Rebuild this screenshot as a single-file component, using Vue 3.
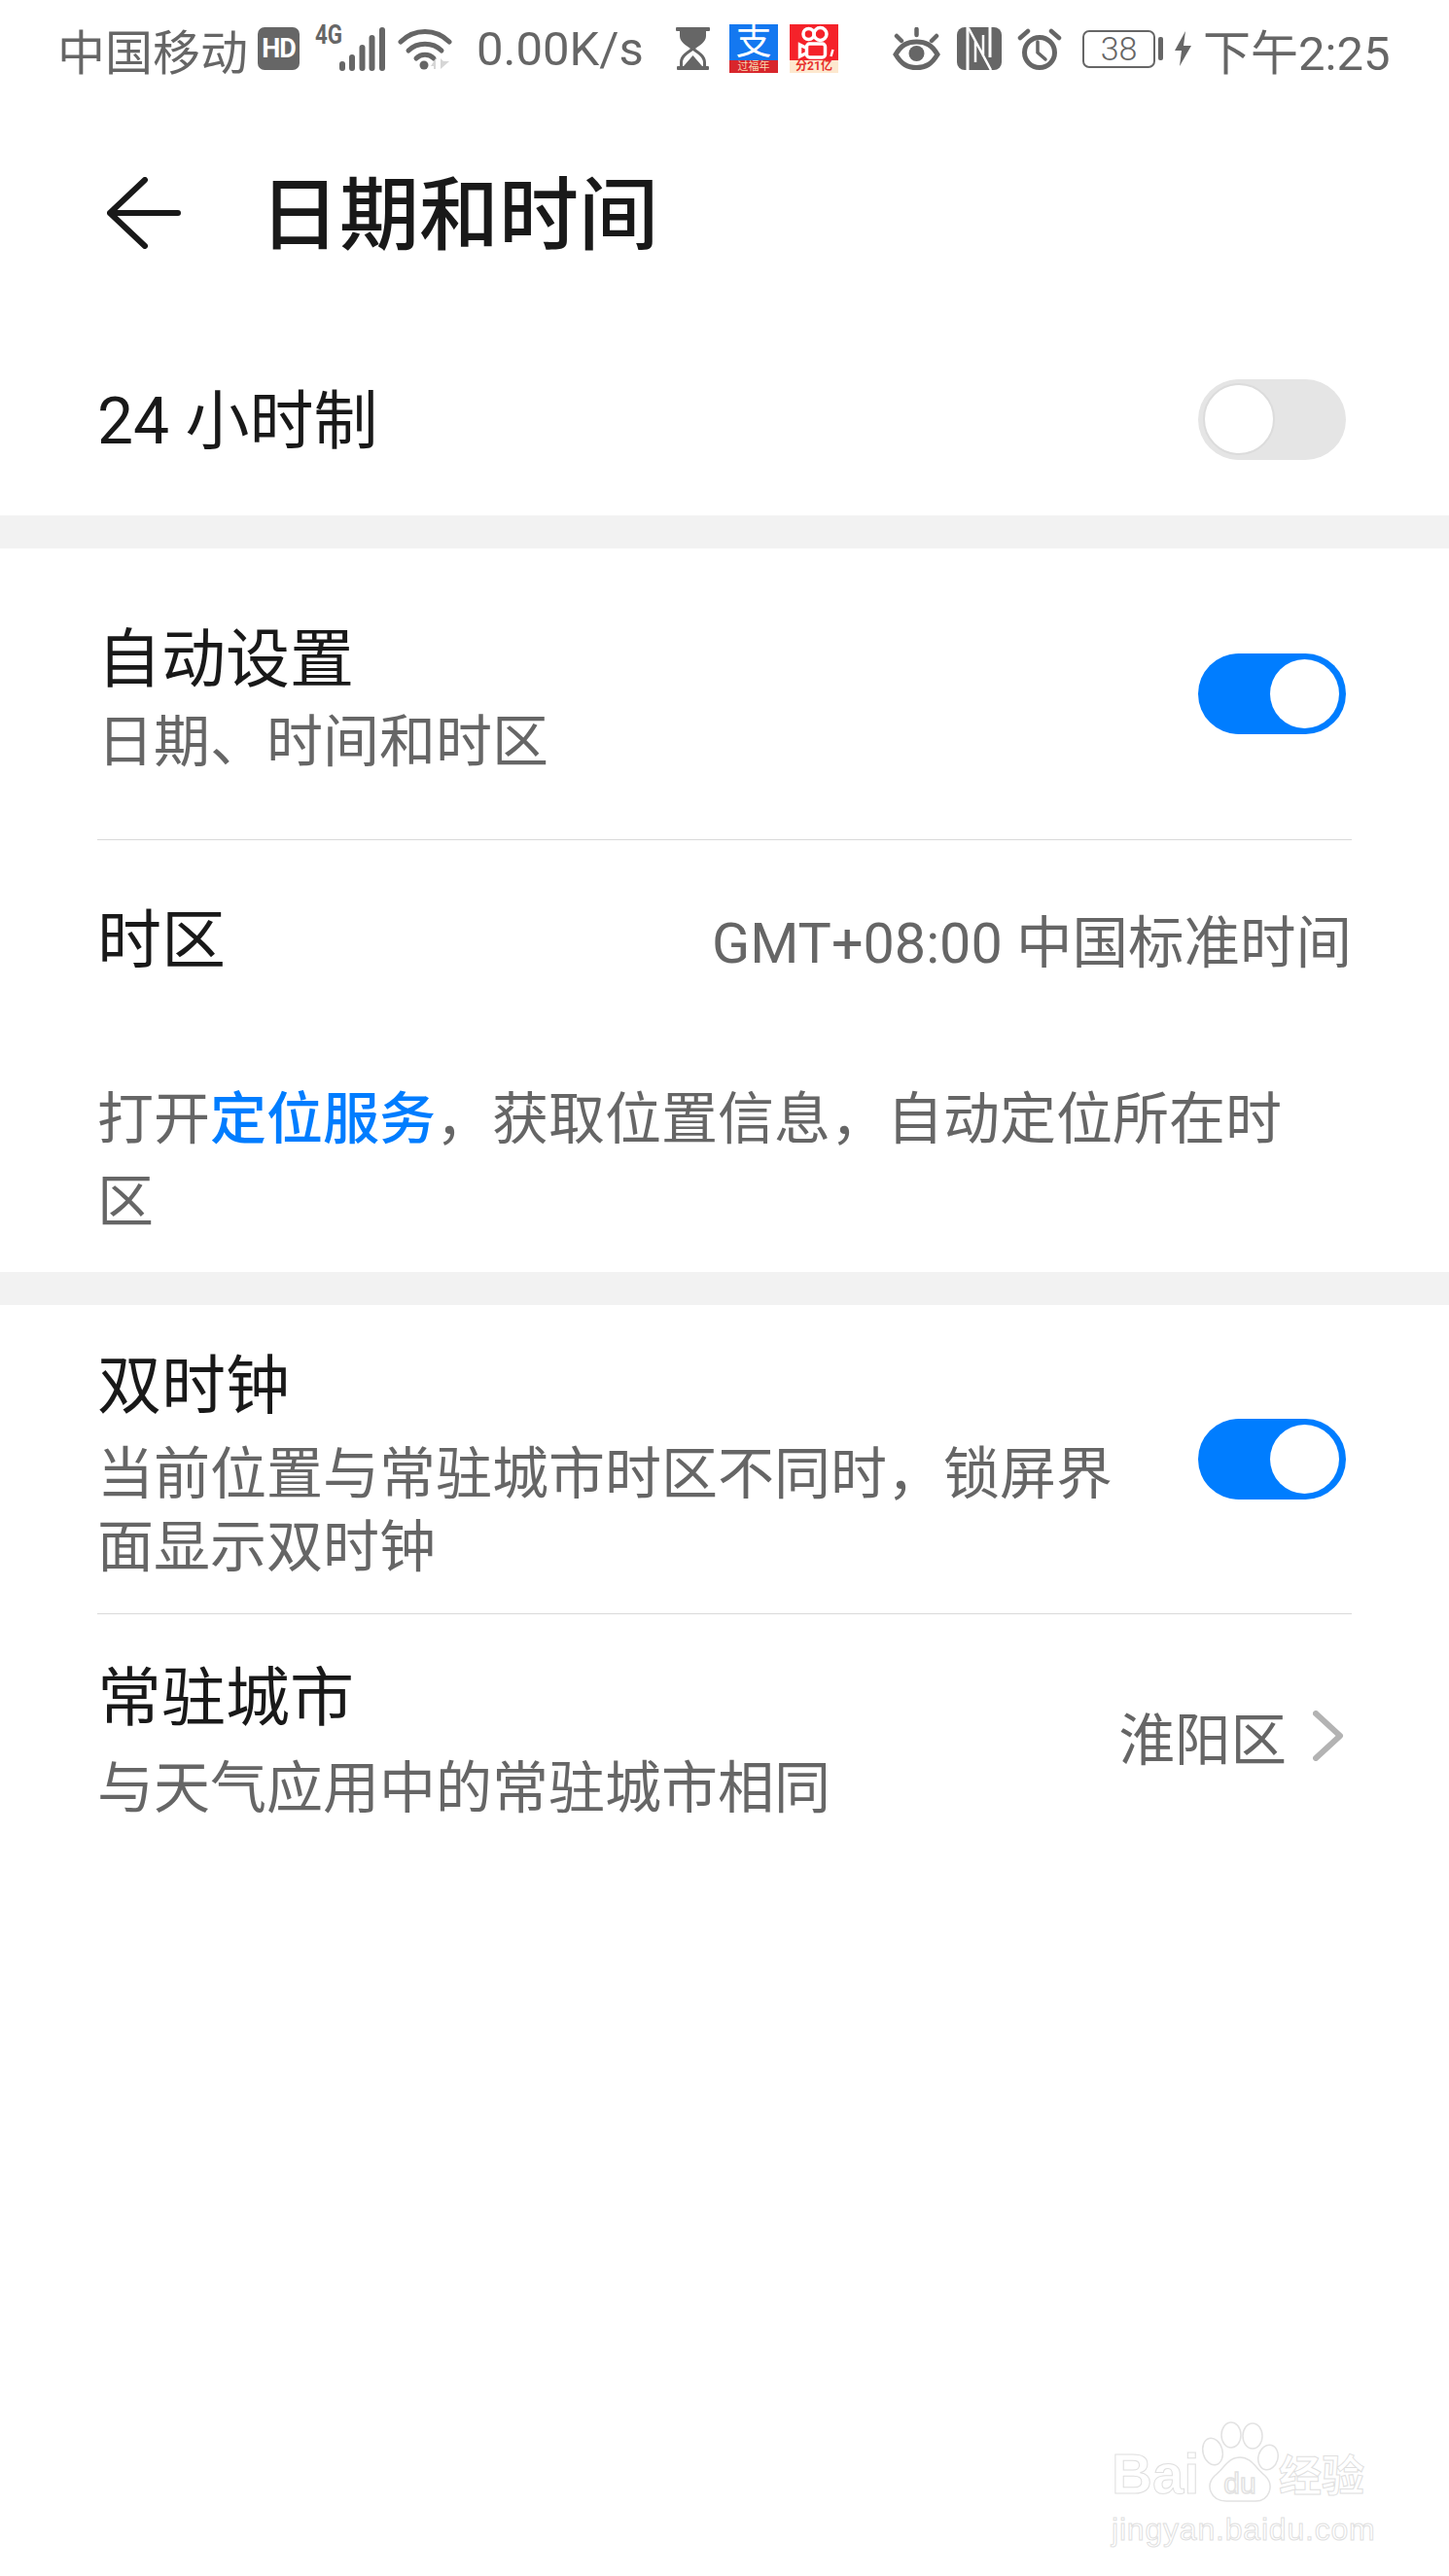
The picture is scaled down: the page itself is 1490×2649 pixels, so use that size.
<script setup>
// 日期和时间 设置页
</script>

<template>
  <div class="page">
    <!-- 状态栏 -->
    <header class="status-bar">
      <span class="carrier">中国移动</span>
      <span class="hd-badge">HD</span>
      <span class="net-type">4G</span>
      <svg class="signal" viewBox="0 0 47 45" fill="#666">
        <rect x="0" y="35" width="6" height="10" rx="3" />
        <rect x="10" y="28" width="6" height="17" rx="3" />
        <rect x="20.500" y="18" width="6" height="27" rx="3" />
        <rect x="30.500" y="8" width="6" height="37" rx="3" />
        <rect x="41" y="0" width="6" height="45" rx="3" />
      </svg>
      <svg class="wifi" viewBox="0 0 56 44" fill="none" stroke="#666" stroke-width="5" stroke-linecap="round">
        <path d="M3 15C17 1 39 1 53 15" />
        <path d="M11 24C20 15 36 15 45 24" />
        <path d="M19 32C24 27 32 27 37 32" />
        <circle cx="27" cy="39" r="4.500" fill="#666" stroke="none" />
        <path d="M39 43V32L34 40H37V43ZM44 32V43L53 35H47Z" fill="#d6d6d6" stroke="none" />
      </svg>
      <span class="speed">0.00K/s</span>
      <svg class="hourglass" viewBox="0 0 35 44" fill="#666">
        <rect x="0" y="0" width="35" height="4" rx="1" />
        <rect x="1" y="40" width="33" height="4" rx="1" />
        <path d="M4 4H31V9C31 15 24 19 20 22C24 25 31 29 31 36V40H28V36C28 31 22 27 17.500 24C13 27 7 31 7 36V40H4V36C4 29 11 25 15 22C11 19 4 15 4 9Z" />
        <path d="M17.500 29L27 40H8Z" />
      </svg>
      <span class="app-icon alipay">
        <span class="alipay-char">支</span>
        <span class="alipay-band">过福年</span>
      </span>
      <span class="app-icon kuaishou">
        <svg class="kuaishou-cam" viewBox="0 0 49 37" fill="none" stroke="#fff" stroke-width="3.500">
          <circle cx="19" cy="10" r="5.500" />
          <circle cx="31" cy="10" r="6.500" />
          <rect x="17" y="20" width="19" height="14" rx="3" />
          <path d="M16 24L10 21V33L16 30" />
          <path d="M44 26L42 33" stroke-width="2.500" />
        </svg>
        <span class="kuaishou-band">分21亿</span>
      </span>
      <svg class="eye" viewBox="0 0 49 44" fill="none" stroke="#666" stroke-width="5" stroke-linecap="round">
        <path d="M3 28C9 18 15 15 24.500 15C34 15 40 18 46 28C40 38 34 41.500 24.500 41.500C15 41.500 9 38 3 28Z" />
        <circle cx="24.500" cy="27" r="8" fill="#666" stroke="none" />
        <path d="M24.500 2V8M4 9L9 14M45 9L40 14" stroke-width="4.500" />
      </svg>
      <svg class="nfc" viewBox="0 0 46 44">
        <rect width="46" height="44" rx="8" fill="#666" />
        <path d="M11 0V44M34 0V31" stroke="#fff" stroke-width="3" />
        <path d="M12 1L35 44M19 14V36M27 8V30" stroke="#fff" stroke-width="2.500" fill="none" />
      </svg>
      <svg class="alarm" viewBox="0 0 46 44" fill="none" stroke="#666" stroke-width="5" stroke-linecap="round">
        <circle cx="23" cy="26" r="15.500" />
        <path d="M21 15V26L29 33" stroke-width="3.500" />
        <path d="M3 11L11 4M43 11L35 4" stroke-width="4.500" />
      </svg>
      <span class="battery"><span class="battery-level">38</span></span>
      <span class="battery-nub"></span>
      <svg class="bolt" viewBox="0 0 17 36" fill="#666">
        <path d="M11 0L0 20H7L5 36L17 15H9Z" />
      </svg>
      <span class="clock">下午2:25</span>
    </header>

    <!-- 标题栏 -->
    <div class="toolbar">
      <svg class="back-icon" viewBox="0 0 76 74" fill="none" stroke="#191919" stroke-width="6" stroke-linecap="round" stroke-linejoin="round">
        <path d="M39 3L3 37L39 71M3 37H73" />
      </svg>
      <h1 class="toolbar-title">日期和时间</h1>
    </div>

    <section class="group group-first">
      <div class="row row-clock">
        <span class="row-title">24 小时制</span>
        <span class="switch"><span class="switch-knob"></span></span>
      </div>
    </section>

    <section class="group">
      <div class="row row-auto">
        <div class="row-text">
          <div class="row-title">自动设置</div>
          <div class="row-sub">日期、时间和时区</div>
        </div>
        <span class="switch on"><span class="switch-knob"></span></span>
      </div>
      <div class="divider"></div>
      <div class="row row-zone">
        <span class="row-title">时区</span>
        <span class="row-value">GMT+08:00 中国标准时间</span>
      </div>
      <p class="zone-note">打开<span class="link">定位服务</span>，获取位置信息，自动定位所在时区</p>
    </section>

    <section class="group">
      <div class="row row-dual">
        <div class="row-text dual-text">
          <div class="row-title">双时钟</div>
          <div class="row-sub">当前位置与常驻城市时区不同时，锁屏界面显示双时钟</div>
        </div>
        <span class="switch on"><span class="switch-knob"></span></span>
      </div>
      <div class="divider"></div>
      <div class="row row-city">
        <div class="row-text">
          <div class="row-title">常驻城市</div>
          <div class="row-sub">与天气应用中的常驻城市相同</div>
        </div>
        <div class="city-value">
          <span class="row-value">淮阳区</span>
          <svg class="chevron" viewBox="0 0 32 52" fill="none" stroke="#b3b3b3" stroke-width="6" stroke-linecap="round" stroke-linejoin="round">
            <path d="M3 3L28 26L3 49" />
          </svg>
        </div>
      </div>
    </section>

    <!-- 水印 -->
    <div class="watermark">
      <div class="wm-top">
        <span class="wm-bai">Bai</span>
        <svg class="wm-paw" viewBox="0 0 80 84" fill="#fff" stroke="#e2e2e2" stroke-width="1.500">
          <ellipse cx="12" cy="31" rx="10" ry="14" transform="rotate(-15 12 31)" />
          <ellipse cx="31" cy="14" rx="10" ry="13" />
          <ellipse cx="53" cy="15" rx="10" ry="13" />
          <ellipse cx="69" cy="37" rx="10" ry="13" transform="rotate(15 69 37)" />
          <path d="M40 37C52 37 56 48 66 56C76 66 70 82 56 82H26C10 82 4 66 14 56C24 48 28 37 40 37Z" />
          <text x="40" y="74" text-anchor="middle" class="wm-du">du</text>
        </svg>
        <span class="wm-jy">经验</span>
      </div>
      <div class="wm-url">jingyan.baidu.com</div>
    </div>
  </div>
</template>

<style scoped>
.page {
  position: relative;
  width: 1490px;
  height: 2649px;
  background: #fff;
  overflow: hidden;
  font-family: Roboto, "Noto Sans CJK SC", sans-serif;
  color: #191919;
}

.status-bar {
  display: flex;
  align-items: center;
  height: 100px;
  padding-left: 59px;
  color: #666;
  font-size: 49px;
}

.carrier {
  width: 196px;
}

.hd-badge {
  width: 43px;
  height: 44px;
  margin-left: 10px;
  background: #666;
  border-radius: 7px;
  color: #fff;
  font-size: 27px;
  font-weight: 700;
  line-height: 44px;
  text-align: center;
  letter-spacing: -1px;
}

.net-type {
  width: 24px;
  margin: -28px 0 0 16px;
  font-size: 28px;
  font-weight: 700;
  line-height: 28px;
  transform: scaleX(0.8);
  transform-origin: left center;
}

.signal {
  width: 47px;
  height: 45px;
  margin-left: 1px;
}

.wifi {
  width: 56px;
  height: 44px;
  margin-left: 13px;
}

.speed {
  width: 176px;
  margin-left: 25px;
}

.hourglass {
  width: 35px;
  height: 44px;
  margin-left: 29px;
}

.app-icon {
  display: flex;
  flex-direction: column;
  width: 50px;
  height: 50px;
}

.alipay {
  margin-left: 20px;
  background: #1478f0;
}

.alipay-char {
  height: 37px;
  color: #fff;
  font-size: 37px;
  line-height: 37px;
  text-align: center;
}

.alipay-band {
  height: 13px;
  background: #d8262c;
  color: #f7d9b0;
  font-size: 11px;
  line-height: 13px;
  text-align: center;
}

.kuaishou {
  align-items: center;
  margin-left: 12px;
  background: #f5222a;
}

.kuaishou-cam {
  width: 50px;
  height: 37px;
}

.kuaishou-band {
  width: 100%;
  height: 13px;
  background: #fde8cf;
  color: #e8322c;
  font-size: 12px;
  font-weight: 700;
  line-height: 13px;
  text-align: center;
}

.eye {
  width: 49px;
  height: 44px;
  margin-left: 56px;
}

.nfc {
  width: 46px;
  height: 44px;
  margin-left: 17px;
}

.alarm {
  width: 46px;
  height: 44px;
  margin-left: 16px;
}

.battery {
  width: 75px;
  height: 39px;
  margin-left: 21px;
  box-sizing: border-box;
  border: 2px solid #666;
  border-radius: 7px;
  text-align: center;
}

.battery-level {
  display: block;
  font-size: 34px;
  font-weight: 300;
  line-height: 35px;
}

.battery-nub {
  width: 5px;
  height: 24px;
  margin-left: 3px;
  background: #666;
  border-radius: 2px;
}

.bolt {
  width: 17px;
  height: 36px;
  margin-left: 12px;
}

.clock {
  margin-left: 12px;
}

.toolbar {
  display: flex;
  align-items: center;
  height: 238px;
  padding-left: 110px;
}

.back-icon {
  width: 76px;
  height: 74px;
}

.toolbar-title {
  margin: 6px 0 0 81px;
  font-size: 82px;
  font-weight: 500;
  line-height: 1.2;
}

.group {
  border-bottom: 34px solid #f2f2f2;
}

.group:last-of-type {
  border-bottom: 0;
}

.row {
  display: flex;
  align-items: center;
  justify-content: space-between;
  margin: 0 100px;
}

.row-title {
  font-size: 66px;
  line-height: 1.2;
}

.row-sub {
  color: #666;
  font-size: 58px;
  line-height: 75px;
}

.row-value {
  color: #666;
  font-size: 57.500px;
}

.row-clock {
  height: 192px;
}

.row-clock .switch {
  margin-bottom: 6px;
}

.row-auto {
  height: 299px;
}

.row-auto .row-text {
  padding-top: 13px;
}

.row-auto .row-title {
  margin-bottom: 7px;
}

.row-zone {
  height: 207px;
}

.row-zone .row-value {
  margin-bottom: 6px;
}

.row-dual {
  height: 317px;
}

.dual-text {
  width: 1060px;
  padding-top: 14px;
}

.dual-text .row-title {
  margin-bottom: 14px;
}

.row-city {
  height: 239px;
}

.row-city .row-text {
  padding-top: 25px;
}

.row-city .row-title {
  margin-bottom: 15px;
}

.switch {
  display: flex;
  flex: none;
  justify-content: flex-start;
  align-items: center;
  box-sizing: border-box;
  width: 152px;
  height: 83px;
  margin-right: 6px;
  padding: 0 5px;
  background: #e5e5e5;
  border-radius: 42px;
}

.switch.on {
  justify-content: flex-end;
  padding: 0 7px;
  background: #007dff;
}

.switch-knob {
  box-sizing: border-box;
  width: 74px;
  height: 74px;
  background: #fff;
  border: 2px solid #dcdcdc;
  border-radius: 50%;
}

.switch.on .switch-knob {
  width: 71px;
  height: 71px;
  border: 0;
}

.divider {
  height: 1px;
  margin: 0 100px;
  background: #d9d9d9;
}

.zone-note {
  margin: 0;
  padding: 38px 160px 29px 100px;
  color: #666;
  font-size: 58px;
  line-height: 85px;
}

.link {
  color: #007dff;
  font-weight: 500;
}

.city-value {
  display: flex;
  align-items: center;
  gap: 27px;
  margin: 0 8px 0 0;
  padding-top: 10px;
}

.chevron {
  width: 32px;
  height: 52px;
}

.watermark {
  position: absolute;
  left: 1143px;
  top: 2490px;
  width: 270px;
  font-family: "Liberation Sans", "Noto Sans CJK SC", sans-serif;
  color: #fff;
  -webkit-text-stroke: 1px #dfdfdf;
}

.wm-top {
  display: flex;
  align-items: flex-end;
  height: 84px;
}

.wm-bai {
  width: 92px;
  font-size: 58px;
  font-weight: 700;
  line-height: 60px;
}

.wm-paw {
  width: 80px;
  height: 84px;
}

.wm-du {
  font-size: 30px;
}

.wm-jy {
  font-size: 44px;
  font-weight: 700;
  line-height: 54px;
}

.wm-url {
  margin-top: 6px;
  font-size: 32px;
  letter-spacing: 0.8px;
  line-height: 42px;
  white-space: nowrap;
}
</style>
